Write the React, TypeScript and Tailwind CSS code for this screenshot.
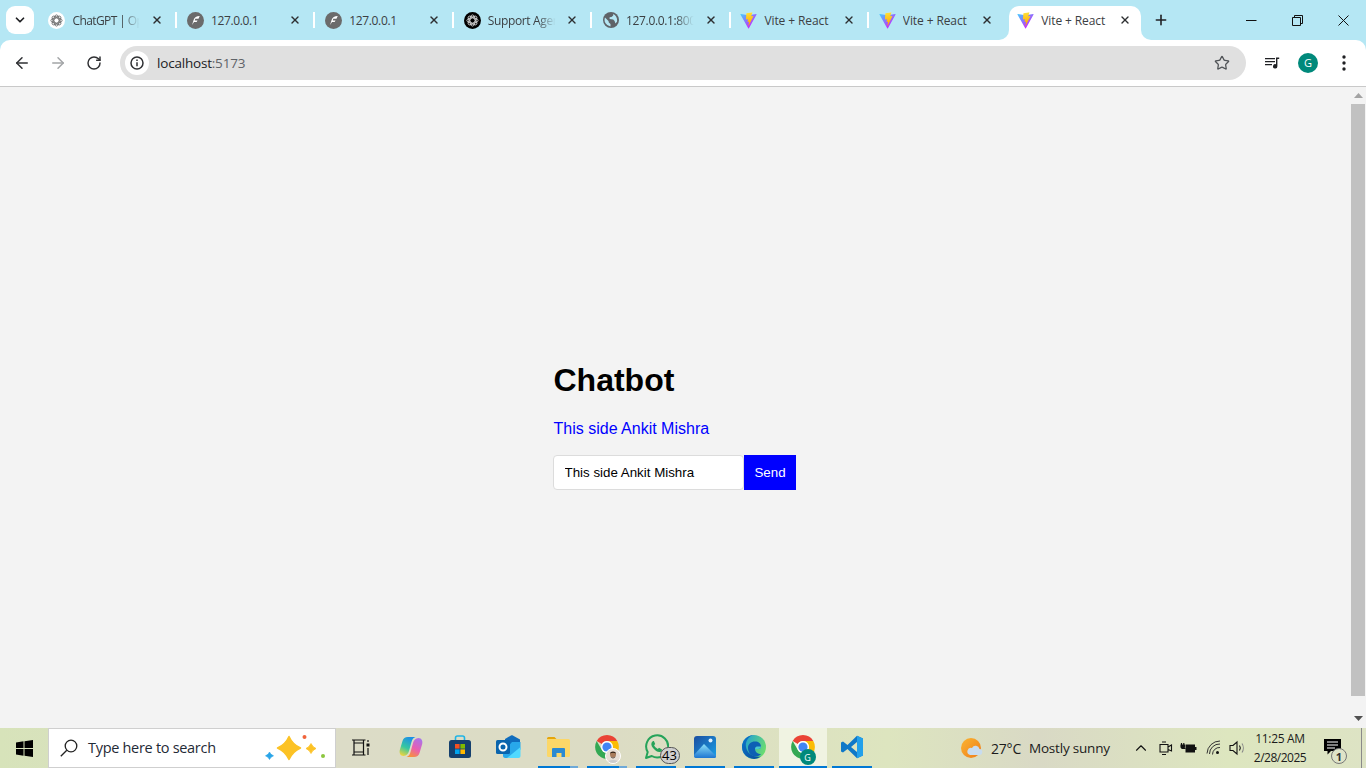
import React from "react";
import { ArrowLeft, ArrowRight, RotateCw, Star, X, Plus, ChevronDown, ChevronUp } from "lucide-react";

const UI = "font-['Open_Sans','Noto_Sans',sans-serif]";

function ViteIcon({ id }: { id: string }) {
  return (
    <svg width="17" height="17" viewBox="0 0 410 404" fill="none">
      <path d="M399.641 59.5246L215.643 388.545C211.844 395.338 202.084 395.378 198.228 388.618L10.5817 59.5563C6.38087 52.1896 12.6802 43.2665 21.0281 44.7586L205.223 77.6824C206.398 77.8924 207.601 77.8904 208.776 77.6763L389.119 44.8058C397.439 43.2894 403.768 52.1434 399.641 59.5246Z" fill={`url(#${id}a)`} />
      <path d="M292.965 1.5744L156.801 28.2552C154.563 28.6937 152.906 30.5903 152.771 32.8664L144.395 174.33C144.198 177.662 147.258 180.248 150.51 179.498L188.42 170.749C191.967 169.931 195.172 173.055 194.443 176.622L183.18 231.775C182.422 235.487 185.907 238.661 189.532 237.56L212.947 230.446C216.577 229.344 220.065 232.527 219.297 236.242L201.398 322.875C200.278 328.294 207.486 331.249 210.492 326.603L212.5 323.5L323.454 102.072C325.312 98.3645 322.108 94.137 318.036 94.9228L279.014 102.454C275.347 103.161 272.227 99.746 273.262 96.1583L298.731 7.86689C299.767 4.27314 296.636 0.855181 292.965 1.5744Z" fill={`url(#${id}b)`} />
      <defs>
        <linearGradient id={`${id}a`} x1="6" y1="33" x2="235" y2="344" gradientUnits="userSpaceOnUse">
          <stop stopColor="#41D1FF" />
          <stop offset="1" stopColor="#BD34FE" />
        </linearGradient>
        <linearGradient id={`${id}b`} x1="194.651" y1="8.81818" x2="236.076" y2="292.989" gradientUnits="userSpaceOnUse">
          <stop stopColor="#FFEA83" />
          <stop offset="0.0833" stopColor="#FFDD35" />
          <stop offset="1" stopColor="#FFA800" />
        </linearGradient>
      </defs>
    </svg>
  );
}

function KnotIcon({ dark }: { dark?: boolean }) {
  const stroke = dark ? "#d8d8d8" : "#6a6a6a";
  return (
    <svg width="17" height="17" viewBox="0 0 17 17">
      <circle cx="8.500" cy="8.500" r="8.500" fill={dark ? "#000" : "#fff"} />
      <g fill="none" stroke={stroke} strokeWidth="0.9">
        <ellipse cx="8.500" cy="8.500" rx="5.600" ry="2.600" />
        <ellipse cx="8.500" cy="8.500" rx="5.600" ry="2.600" transform="rotate(45 8.500 8.500)" />
        <ellipse cx="8.500" cy="8.500" rx="5.600" ry="2.600" transform="rotate(90 8.500 8.500)" />
        <ellipse cx="8.500" cy="8.500" rx="5.600" ry="2.600" transform="rotate(135 8.500 8.500)" />
      </g>
    </svg>
  );
}

function FeatherIcon() {
  return (
    <svg width="17" height="17" viewBox="0 0 16 16">
      <circle cx="8" cy="8" r="8" fill="#6b6b6b" />
      <path d="M12 3.800C9 3.800 7 5 6.200 7.500L4.800 12.300l1.800-2.800h2.500l.8-1.600H7.300l.5-1.500h3Z" fill="#fff" />
    </svg>
  );
}

function GlobeIcon() {
  return (
    <svg width="16" height="16" viewBox="0 0 16 16">
      <circle cx="8" cy="8" r="8" fill="#5f6368" />
      <path d="M2 5.500 5.500 9l.3 1.500L7.500 12v2.400A6.600 6.600 0 0 1 2 5.500ZM10.200 1.900v1.600L8.500 5 6.600 5.300V7l3.600.4 1.400 1.500.8 2.600 1.600-1.800c.6-3.500-1-6.700-3.800-7.800Z" fill="#b5e7f4" />
    </svg>
  );
}

function Tab({ icon, title, fade, spacing, noSep }: { icon: React.ReactNode; title: string; fade?: boolean; spacing: string; noSep?: boolean }) {
  return (
    <div className="flex h-[28px] w-[138.4px] shrink-0 items-center pl-[10.4px]">
      <div className="flex w-[17px] shrink-0 justify-center">{icon}</div>
      <span
        className={`ml-[7px] mt-[1px] w-[69px] shrink-0 overflow-hidden whitespace-nowrap text-[12px] leading-[16px] text-[#3c4043] ${spacing} ${fade ? "[mask-image:linear-gradient(to_right,#000_72%,transparent_98%)]" : ""}`}
      >
        {title}
      </span>
      <X size={12} strokeWidth={2.8} className="ml-[9.500px] shrink-0 text-[#2d2f31]" />
      {!noSep && <div className="ml-[12px] h-[16px] w-[2px] shrink-0 bg-white" />}
    </div>
  );
}

function ActiveTab() {
  return (
    <div className="relative ml-[1.900px] mt-[6px] flex h-[34px] w-[132px] shrink-0 items-start rounded-t-[10px] bg-white pl-[8px]">
      <div className="absolute bottom-0 left-[-10px] h-[10px] w-[10px] bg-white">
        <div className="h-full w-full rounded-br-[10px] bg-[#b5e7f4]" />
      </div>
      <div className="absolute bottom-0 right-[-10px] h-[10px] w-[10px] bg-white">
        <div className="h-full w-full rounded-bl-[10px] bg-[#b5e7f4]" />
      </div>
      <div className="flex h-[28px] items-center">
        <div className="flex w-[17px] shrink-0 justify-center"><ViteIcon id="v3" /></div>
        <span className="ml-[7.500px] mt-[1px] w-[69px] shrink-0 whitespace-nowrap text-[12px] leading-[16px] tracking-[-0.1px] text-[#3c4043]">Vite + React</span>
        <X size={12} strokeWidth={2.8} className="ml-[8.500px] shrink-0 text-[#2d2f31]" />
      </div>
    </div>
  );
}

function TabStrip() {
  return (
    <div className="flex h-10 shrink-0 bg-[#b5e7f4]">
      <div className="ml-[6px] mt-[6px] flex h-[28px] w-[28px] items-center justify-center rounded-[9px] bg-white">
        <ChevronDown size={14} strokeWidth={3} className="text-[#202124]" />
      </div>
      <div className="ml-[4.100px] mt-[6px] flex items-start">
        <Tab icon={<KnotIcon />} title="ChatGPT | OpenAI" fade spacing="tracking-[-0.6px]" />
        <Tab icon={<FeatherIcon />} title="127.0.0.1" spacing="tracking-[-0.35px]" />
        <Tab icon={<FeatherIcon />} title="127.0.0.1" spacing="tracking-[-0.35px]" />
        <Tab icon={<KnotIcon dark />} title="Support Agent" fade spacing="tracking-[-0.35px]" />
        <Tab icon={<GlobeIcon />} title="127.0.0.1:8000" fade spacing="tracking-[-0.35px]" />
        <Tab icon={<ViteIcon id="v1" />} title="Vite + React" spacing="tracking-[-0.1px]" />
        <Tab icon={<ViteIcon id="v2" />} title="Vite + React" spacing="tracking-[-0.1px]" noSep />
      </div>
      <ActiveTab />
      <div className="ml-[12px] mt-[6px] flex h-[28px] w-[16px] items-center justify-center">
        <Plus size={16} strokeWidth={2.4} className="text-[#202124]" />
      </div>
      <div className="ml-auto flex h-10 items-start">
        <div className="flex h-10 w-[46px] items-center justify-center">
          <svg width="11" height="11" viewBox="0 0 11 11"><path d="M0 5.500h10.500" stroke="#111" strokeWidth="1" /></svg>
        </div>
        <div className="flex h-10 w-[46px] items-center justify-center">
          <svg width="11" height="11" viewBox="0 0 11 11" fill="none" stroke="#111"><path d="M.5 2.500h8v8h-8zM2.500 2.500V.5h8v8h-2" /></svg>
        </div>
        <div className="flex h-10 w-[46px] items-center justify-center">
          <svg width="11" height="11" viewBox="0 0 11 11" fill="none" stroke="#111"><path d="M.5.5l10 10M10.500.5l-10 10" /></svg>
        </div>
      </div>
    </div>
  );
}

function Toolbar() {
  return (
    <div className="flex h-[47px] shrink-0 items-start rounded-t-[10px] border-b border-[#c9c9c9] bg-white pt-[6px]">
      <div className="flex h-[34px] items-center pl-[13px]">
        <ArrowLeft size={18} strokeWidth={2} className="text-[#2f3033]" />
        <ArrowRight size={18} strokeWidth={2} className="ml-[18px] text-[#a3a5a7]" />
        <RotateCw size={16} strokeWidth={2.2} className="ml-[19px] text-[#2f3033]" />
      </div>
      <div className="ml-[18px] flex h-[34px] w-[1126px] items-center rounded-full bg-[#e0e0e0] pl-[5px]">
        <div className="flex h-6 w-6 items-center justify-center rounded-full bg-white">
          <svg width="16" height="16" viewBox="0 0 16 16" fill="none" stroke="#303134" strokeWidth="1.5">
            <circle cx="8" cy="8" r="6" />
            <path d="M8 7.200v4M8 4.400v1.500" />
          </svg>
        </div>
        <span className="ml-[8px] text-[13.500px] tracking-[-0.2px] text-[#202124]">
          localhost<span className="text-[#5f6368]">:5173</span>
        </span>
        <Star size={16} strokeWidth={1.9} className="ml-auto mr-[16px] text-[#505357]" />
      </div>
      <div className="flex h-[34px] items-center">
        <svg className="ml-[18px]" width="16" height="16" viewBox="0 0 16 16" fill="#202124">
          <path d="M1 3h10v1.300H1zM1 6h10v1.300H1zM1 9h7v1.300H1z" />
          <path d="M12 2.600h3.200v1.500h-1.800v7.200a2.200 2.200 0 1 1-1.400-2Z" />
        </svg>
        <div className={`ml-[18px] flex h-5 w-5 items-center justify-center rounded-full bg-[#00897b] text-[11px] text-white ${UI}`}>G</div>
        <svg className="ml-[24px]" width="4" height="16" viewBox="0 0 4 16" fill="#202124">
          <circle cx="2" cy="2" r="1.700" /><circle cx="2" cy="8" r="1.700" /><circle cx="2" cy="14" r="1.700" />
        </svg>
      </div>
    </div>
  );
}

function Scrollbar() {
  return (
    <div className="flex w-[15px] shrink-0 flex-col items-center bg-[#f3f3f3]">
      <svg className="mt-[6px]" width="9" height="5" viewBox="0 0 9 5"><path d="M4.500 0 9 5H0Z" fill="#a3a3a3" /></svg>
      <div className="mt-[6px] h-[592px] w-[14px] self-start bg-[#c1c1c1]" />
      <svg className="mt-[20px]" width="9" height="5" viewBox="0 0 9 5"><path d="M4.500 5 0 0h9Z" fill="#505050" /></svg>
    </div>
  );
}

function Chatbot() {
  return (
    <div className="flex flex-1 justify-center bg-[#f3f3f3] pt-[275px] font-['Liberation_Sans',Arial,sans-serif]">
      <div className="mr-[3px] flex w-[243px] flex-col">
        <h1 className="pl-[1px] text-[32px] font-bold leading-[37px] text-black">Chatbot</h1>
        <p className="mt-[21px] pl-[1px] text-[16px] leading-[18px] text-[#0000ff]">This side Ankit Mishra</p>
        <div className="mt-[17px] flex h-[35px]">
          <input
            readOnly
            value="This side Ankit Mishra"
            className="h-[35px] w-[191px] rounded-[4px] border border-[#dcdcdc] bg-white pl-[11px] text-[13.330px] text-black outline-none"
          />
          <button className="h-[35px] w-[52px] bg-[#0000ff] pl-[1px] text-[13.330px] text-white">Send</button>
        </div>
      </div>
    </div>
  );
}

function Sparkles() {
  return (
    <svg width="68" height="32" viewBox="0 0 68 32">
      <path d="M25 4.500Q28.500 12.500 36.500 16 28.500 19.500 25 27.500 21.500 19.500 13.500 16 21.500 12.500 25 4.500Z" fill="#fcc225" stroke="#fcc225" strokeWidth="1.500" strokeLinejoin="round" />
      <path d="M47 11.500Q48.500 15 52 16.500 48.500 18 47 21.500 45.500 18 42 16.500 45.500 15 47 11.500Z" fill="#fcc225" stroke="#fcc225" strokeWidth="0.8" strokeLinejoin="round" />
      <path d="M5.500 20Q6.500 22.800 9.500 23.800 6.500 24.800 5.500 27.500 4.500 24.800 1.500 23.800 4.500 22.800 5.500 20Z" fill="#2aa5e8" stroke="#2aa5e8" strokeWidth="0.6" strokeLinejoin="round" />
      <circle cx="40.500" cy="5" r="2" fill="#f0643c" />
      <circle cx="59" cy="24" r="2" fill="#8cc63f" />
    </svg>
  );
}

function ChromeLogo() {
  return (
    <svg width="26" height="26" viewBox="0 0 48 48">
      <path d="M24 2A22 22 0 0 1 43 13H24a11 11 0 0 0-9.500 5.500L5 13A22 22 0 0 1 24 2Z" fill="#ea4335" />
      <path d="M43 13a22 22 0 0 1-19 33l9.500-16.500A11 11 0 0 0 24 13Z" fill="#fbbc04" />
      <path d="M5 13a22 22 0 0 0 19 33l9.500-16.500a11 11 0 0 1-19 0Z" fill="#34a853" />
      <circle cx="24" cy="24" r="11" fill="#fff" />
      <circle cx="24" cy="24" r="8.500" fill="#4285f4" />
    </svg>
  );
}

function Cell({ children, line, wide }: { children: React.ReactNode; line?: "one" | "stack"; wide?: boolean }) {
  return (
    <div className={`flex h-10 shrink-0 flex-col items-center ${wide ? "mx-[0.5px] w-[48px] bg-[#f0f3e2]" : "w-[49px]"}`}>
      <div className="relative flex h-[38px] items-center justify-center">{children}</div>
      {line === "one" && <div className={`h-[2px] bg-[#0078d4] ${wide ? "w-[48px]" : "w-10"}`} />}
      {line === "stack" && (
        <div className="flex h-[2px] w-10">
          <div className="w-8 bg-[#0078d4]" />
          <div className="w-2 bg-[#6ea9d8]" />
        </div>
      )}
    </div>
  );
}

function Taskbar() {
  return (
    <div className={`flex h-10 shrink-0 items-start bg-[linear-gradient(90deg,#d7e3ba_0%,#dcdcc7_25%,#dcdcc4_45%,#dde5bf_65%,#d9d9c5_76%,#dde6bf_90%,#dde3c4_100%)] ${UI}`}>
      <div className="flex h-10 w-[48px] items-center justify-center">
        <svg width="17" height="17" viewBox="0 0 17 17" fill="#000">
          <path d="M0 2.400 7.500 1.300V8H0ZM8.500 1.200 17 0v8H8.500ZM0 9h7.500v6.700L0 14.600ZM8.500 9H17v8l-8.500-1.200Z" />
        </svg>
      </div>
      <div className="flex h-10 w-[288px] items-center border border-[#cfcfcf] bg-white">
        <svg className="ml-[11px]" width="18" height="18" viewBox="0 0 18 18" fill="none" stroke="#222" strokeWidth="1.3">
          <circle cx="11" cy="7" r="5.800" />
          <path d="M6.800 11.200.8 17.200" />
        </svg>
        <span className="ml-[10px] text-[14.500px] tracking-[-0.3px] text-[#1f2a36]">Type here to search</span>
        <div className="ml-auto mr-[3px]"><Sparkles /></div>
      </div>

      <Cell>
        <svg width="18" height="17" viewBox="0 0 18 17" fill="none" stroke="#111" strokeWidth="1.200">
          <path d="M0 1h13.500M2 1v3h9.500V1M0 16h13.500M2 16v-3h9.500v3M2 4v9M11.500 4v9" />
          <path d="M16 1v2M16 9v7" />
          <rect x="14.500" y="4.500" width="3" height="3" fill="#111" stroke="none" />
        </svg>
      </Cell>
      <div className="ml-[1px] flex">
        <Cell>
          <svg width="24" height="22" viewBox="0 0 24 22">
            <defs>
              <linearGradient id="cp1" x1="0.6" y1="0" x2="0.2" y2="1"><stop stopColor="#1c8fe6" /><stop offset=".55" stopColor="#35c8a0" /><stop offset="1" stopColor="#f2d53c" /></linearGradient>
              <linearGradient id="cp2" x1="0.8" y1="0" x2="0.3" y2="1"><stop stopColor="#a774ec" /><stop offset=".55" stopColor="#e95fb0" /><stop offset="1" stopColor="#f7923c" /></linearGradient>
            </defs>
            <path d="M9 1h7.500c-2.200.8-3.300 2.500-4 5l-2.500 9c-.8 2.800-2.500 5-5.500 5C1.500 20 0 17 .8 14L3.500 5C4.300 2.500 6 1 9 1Z" fill="url(#cp1)" />
            <path d="M15 21H7.500c2.200-.8 3.300-2.500 4-5L14 7c.8-2.800 2.500-5 5.500-5 3 0 4.500 3 3.700 6L20.500 17c-.8 2.500-2.500 4-5.500 4Z" fill="url(#cp2)" />
          </svg>
        </Cell>
        <Cell>
          <svg width="24" height="24" viewBox="0 0 24 24">
            <path d="M7.500 6V3a2 2 0 0 1 2-2h5a2 2 0 0 1 2 2v3" fill="none" stroke="#1fb4e6" strokeWidth="1.600" />
            <rect x="1" y="5" width="22" height="18" rx="2.500" fill="#15406e" />
            <rect x="7" y="9" width="4.600" height="4.600" fill="#f25022" />
            <rect x="12.400" y="9" width="4.600" height="4.600" fill="#7fba00" />
            <rect x="7" y="14.400" width="4.600" height="4.600" fill="#00a4ef" />
            <rect x="12.400" y="14.400" width="4.600" height="4.600" fill="#ffb900" />
          </svg>
        </Cell>
        <Cell>
          <svg width="25" height="24" viewBox="0 0 25 24">
            <path d="M9 4l6-3.500c.6-.3 1.200-.3 1.800 0L24 4.500v6H9Z" fill="#0f6cbd" />
            <path d="M16 7h8.500v7.500L14 23H9c-.8 0-2-.8-2-2v-4Z" fill="#28a8ea" />
            <path d="M24.500 12v9a2 2 0 0 1-2 2H11Z" fill="#50d9ff" />
            <rect x="0" y="5" width="14" height="14" rx="1.500" fill="#0a64ad" />
            <circle cx="7" cy="12" r="3.500" fill="none" stroke="#fff" strokeWidth="2" />
          </svg>
        </Cell>
        <Cell line="stack">
          <svg width="24" height="22" viewBox="0 0 24 22">
            <path d="M1 2.500a1.500 1.500 0 0 1 1.500-1.500h6L11 3.500H1Z" fill="#e5a50a" />
            <path d="M1 3h21.500A1.500 1.500 0 0 1 24 4.500v15a1.500 1.500 0 0 1-1.500 1.500h-20A1.500 1.500 0 0 1 1 19.500Z" fill="#fcd768" />
            <path d="M7 12h11a1 1 0 0 1 1 1v8h-3.500v-4h-5v4H6v-8a1 1 0 0 1 1-1Z" fill="#2b8ad2" />
          </svg>
        </Cell>
        <Cell line="stack">
          <ChromeLogo />
          <div className="absolute bottom-[2px] left-[11px] h-4 w-4 overflow-hidden rounded-full border border-white bg-[#e8dfd6]">
            <svg width="14" height="14" viewBox="0 0 14 14">
              <circle cx="7" cy="5.500" r="3" fill="#a97c5c" />
              <path d="M4 4.500C4 2 10 2 10 4.500 8 3.500 6 3.500 4 4.500Z" fill="#2a1d14" />
              <path d="M4.500 6.500C5 9.500 9 9.500 9.500 6.500L9 8.500 7 9.500 5 8.500Z" fill="#2a1d14" />
              <path d="M1 14c.5-4 11.500-4 12 0Z" fill="#ccc" />
            </svg>
          </div>
        </Cell>
        <Cell line="one">
          <svg width="26" height="26" viewBox="0 0 26 26" fill="none">
            <path d="M3 24l1.700-6A11 11 0 1 1 8.800 22Z" stroke="#25a35a" strokeWidth="2" strokeLinejoin="round" />
            <path d="M9.500 7.500c-1.800 1.500-1.500 4 .5 6.500s5 4.500 7 4c1.500-.4 2-1.600 2-2.600l-3-1.600-1.200 1.200c-1.300-.5-3-2.200-3.700-3.700l1.100-1.300L11 7.200c-.5-.2-1-.1-1.500.3Z" fill="#25a35a" />
          </svg>
          <div className="absolute bottom-[2px] left-[17px] flex h-[17px] w-[20px] items-center justify-center rounded-full border border-[#555] bg-[#cfcfcf] text-[13px] leading-none text-black">43</div>
        </Cell>
        <Cell line="one">
          <svg width="24" height="24" viewBox="0 0 24 24">
            <defs>
              <linearGradient id="ph1" x1="0" y1="0" x2="1" y2="1"><stop stopColor="#1b4ea0" /><stop offset="1" stopColor="#1aa0e8" /></linearGradient>
              <linearGradient id="ph2" x1="0" y1="0" x2="0" y2="1"><stop stopColor="#8ce0f8" /><stop offset="1" stopColor="#1d76d2" /></linearGradient>
            </defs>
            <rect x="1" y="1" width="22" height="22" rx="3" fill="url(#ph1)" />
            <path d="M1 20 11 9l6 6 6 6v.5a1.500 1.500 0 0 1-1.500 1.500H3a2 2 0 0 1-2-2Z" fill="url(#ph2)" />
            <circle cx="17.500" cy="5.500" r="2" fill="#dff0ff" />
          </svg>
        </Cell>
        <Cell line="one">
          <svg width="26" height="26" viewBox="0 0 26 26">
            <defs>
              <linearGradient id="ed1" x1="0" y1="0.300" x2="1" y2="0.700"><stop stopColor="#1e9fd8" /><stop offset="1" stopColor="#6fe06a" /></linearGradient>
              <linearGradient id="ed2" x1="0" y1="0" x2="1" y2="1"><stop stopColor="#0c78cc" /><stop offset="1" stopColor="#0a4a9c" /></linearGradient>
            </defs>
            <circle cx="13" cy="13" r="12" fill="url(#ed1)" />
            <path d="M1 13A12 12 0 0 1 13 1C7 2 4 8 5 13c1 6 7 11 15 9.500A12 12 0 0 1 1 13Z" fill="url(#ed2)" />
            <path d="M7 14c0-4 3-6.500 7-6.500 3.500 0 6 2 6 5 0 1.500-1 2.500-3 2.500h-3c0 3 3 5 6 5-1 1.200-3 2.500-5.500 2.500C10 22.500 7 18 7 14Z" fill="#0d5fb4" />
            <path d="M14 15c0-1.500.8-2.500 2-2.500H20c0 1.500-1 2.500-3 2.500Z" fill="#48c8d0" />
          </svg>
        </Cell>
        <Cell line="one" wide>
          <ChromeLogo />
          <div className="absolute bottom-[1px] left-[10px] flex h-4 w-4 items-center justify-center rounded-full bg-[#00897b] text-[9px] leading-none text-white">G</div>
        </Cell>
        <Cell line="one">
          <svg width="24" height="24" viewBox="0 0 24 24">
            <path d="M17 .8 7.500 10 3 6.500 1 7.500v9l2 1 4.500-3.500L17 23.200l6-2.700V3.500ZM17 7v10l-6-5Z" fill="#0f78c8" />
            <path d="M17 .8 23 3.500v17l-6 2.700Z" fill="#22a0ea" />
          </svg>
        </Cell>
      </div>

      <div className="ml-[85px] flex h-10 items-center">
        <svg width="22" height="22" viewBox="0 0 22 22">
          <defs>
            <linearGradient id="wx" x1="0" y1="0" x2="1" y2="1"><stop stopColor="#fbb531" /><stop offset="1" stopColor="#ef7c1a" /></linearGradient>
          </defs>
          <circle cx="10" cy="11" r="10" fill="url(#wx)" />
          <path d="M9 18h9a3 3 0 0 0 .5-6 4 4 0 0 0-7.500-1 3.500 3.500 0 0 0-2 7Z" fill="#c8dcf0" />
        </svg>
        <span className="ml-[8px] w-[38px] text-[14px] tracking-[-0.2px] text-[#1b1b1b]">27°C</span>
        <span className="w-[83px] whitespace-nowrap text-[13.500px] tracking-[-0.2px] text-[#1b1b1b]">Mostly sunny</span>
        <ChevronUp size={18} strokeWidth={1.500} className="ml-[20px] text-[#111]" />
        <svg className="ml-[9px]" width="14" height="18" viewBox="0 0 14 18" fill="none" stroke="#111" strokeWidth="1.100">
          <path d="M1 5.500h8v7.500H1zM9 8l3.500-2v6L9 10.500M3 3h4M3 15.500h4" />
        </svg>
        <svg className="ml-[7px]" width="17" height="14" viewBox="0 0 17 14" fill="none">
          <rect x="5.500" y="3.500" width="9.500" height="8" fill="#111" />
          <rect x="15" y="6" width="1.500" height="3" fill="#111" />
          <path d="M1.500 2v3.500c0 1 .7 2 1.700 2h2.300M3.800 2v3" stroke="#111" strokeWidth="1.200" />
          <path d="M.5 3.500h4.500v2.500c0 1-.8 1.500-2.200 1.500S.5 7 .5 6Z" fill="#111" />
        </svg>
        <svg className="ml-[9px]" width="16" height="16" viewBox="0 0 16 16" fill="none" stroke="#333" strokeWidth="1">
          <path d="M1 13.500A13 13 0 0 1 14 1M3.500 14A10 10 0 0 1 14 4M6.500 14.500A7 7 0 0 1 14 7.500" />
          <circle cx="11.500" cy="12.500" r="1.500" fill="#111" stroke="none" />
        </svg>
        <svg className="ml-[7px]" width="17" height="16" viewBox="0 0 17 16" fill="none" stroke="#111" strokeWidth="1.100">
          <path d="M1 5.500h3L8 2v12L4 10.500H1z" />
          <path d="M10.500 5.500c1 1.500 1 3.500 0 5" />
          <path d="M13 3.500c1.700 2.500 1.700 6.500 0 9" stroke="#888" />
        </svg>
        <div className="ml-[3px] flex w-[62px] flex-col items-center text-[12px] leading-[19px] text-[#1b1b1b]">
          <span className="whitespace-nowrap tracking-[-0.35px]">11:25 AM</span>
          <span className="whitespace-nowrap tracking-[-0.5px]">2/28/2025</span>
        </div>
        <div className="relative ml-[13px] flex h-10 w-[24px] items-center">
          <svg width="17" height="16" viewBox="0 0 17 16" fill="#000" className="mb-[2px]">
            <path d="M0 0h17v12H7l-3.500 3.500V12H0Z" />
            <path d="M3 3h11M3 6h11M3 9h8" stroke="#fff" strokeWidth="1" />
          </svg>
          <div className="absolute bottom-[4px] left-[7px] flex h-[16px] w-[16px] items-center justify-center rounded-full border border-[#777] bg-[#dfe4c8] text-[11px] font-bold leading-none text-[#333]">1</div>
        </div>
        <div className="ml-[13px] h-10 w-[1px] bg-[#8a8a8a]" />
      </div>
    </div>
  );
}

export default function App() {
  return (
    <div className="flex h-screen w-[1366px] flex-col overflow-hidden bg-[#b5e7f4]">
      <div className={UI}>
        <TabStrip />
        <Toolbar />
      </div>
      <div className="flex min-h-0 flex-1">
        <Chatbot />
        <Scrollbar />
      </div>
      <Taskbar />
    </div>
  );
}
